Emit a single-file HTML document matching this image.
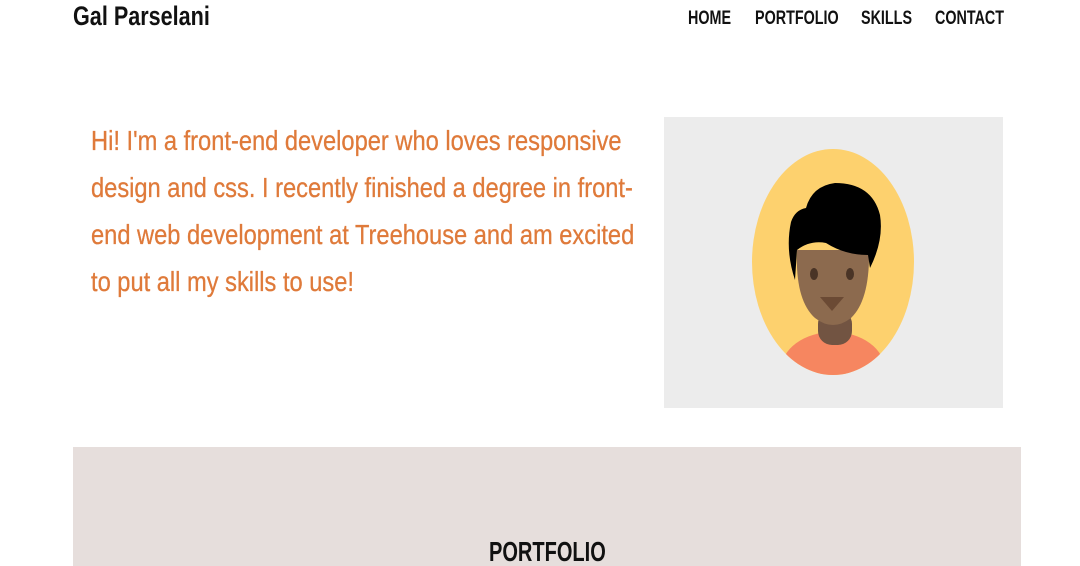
<!DOCTYPE html>
<html><head><style>
html,body{margin:0;width:1080px;height:566px;overflow:hidden;background:#fff;font-family:"Liberation Sans",sans-serif;position:relative}
.c{position:absolute;display:inline-block;transform-origin:0 0;white-space:nowrap}
.logo{left:73px;top:1px;font-size:27px;font-weight:bold;color:#111;transform:scaleX(.8)}
.nav{top:8px;font-size:19px;font-weight:bold;color:#111;transform:scaleX(.755)}
.txt{position:absolute;left:91px;top:117px;font-size:28px;line-height:47px;color:#df7a3a;transform:scaleX(.845);transform-origin:0 0;width:660px;-webkit-text-stroke:.3px #df7a3a}
.panel{position:absolute;left:664px;top:117px;width:339px;height:291px;background:#ececec}
.port{position:absolute;left:73px;top:447px;width:948px;height:119px;background:#e6dedc}
</style></head><body>
<div class="c logo">Gal Parselani</div>
<div class="c nav" style="left:688px">HOME</div>
<div class="c nav" style="left:755px">PORTFOLIO</div>
<div class="c nav" style="left:861px">SKILLS</div>
<div class="c nav" style="left:935px">CONTACT</div>
<div class="txt">Hi! I'm a front-end developer who loves responsive design and css. I recently finished a degree in front-end web development at Treehouse and am excited to put all my skills to use!</div>
<div class="panel"></div>
<svg style="position:absolute;left:0;top:0" width="1080" height="566">
<defs><clipPath id="cp"><ellipse cx="833" cy="262" rx="81" ry="113"/></clipPath></defs>
<ellipse cx="833" cy="262" rx="81" ry="113" fill="#fdd16e"/>
<g clip-path="url(#cp)">
<ellipse cx="833" cy="370" rx="52" ry="38" fill="#f68660"/>
<rect x="818" y="310" width="34" height="35" rx="14" fill="#725442"/>
<path d="M797 250 Q795 300 815 318 Q833 332 851 318 Q870 300 869 250 Z" fill="#8c6a4e"/>
<path d="M795 280 Q785 250 791 222 Q795 210 806 208 Q812 186 835 183 Q872 183 880 215 Q884 240 870 268 L868 255 Q845 255 826 243 Q810 240 797 250 Z" fill="#000"/>
<ellipse cx="814" cy="274" rx="4" ry="6" fill="#4a3426"/>
<ellipse cx="850" cy="274" rx="4" ry="6" fill="#4a3426"/>
<path d="M820 297 L844 297 L832 311 Z" fill="#6b4a34"/>
</g>
</svg>
<div class="port"></div>
<div class="c" style="left:489px;top:536px;font-size:28px;font-weight:bold;color:#111;transform:scaleX(.715)">PORTFOLIO</div>
</body></html>
